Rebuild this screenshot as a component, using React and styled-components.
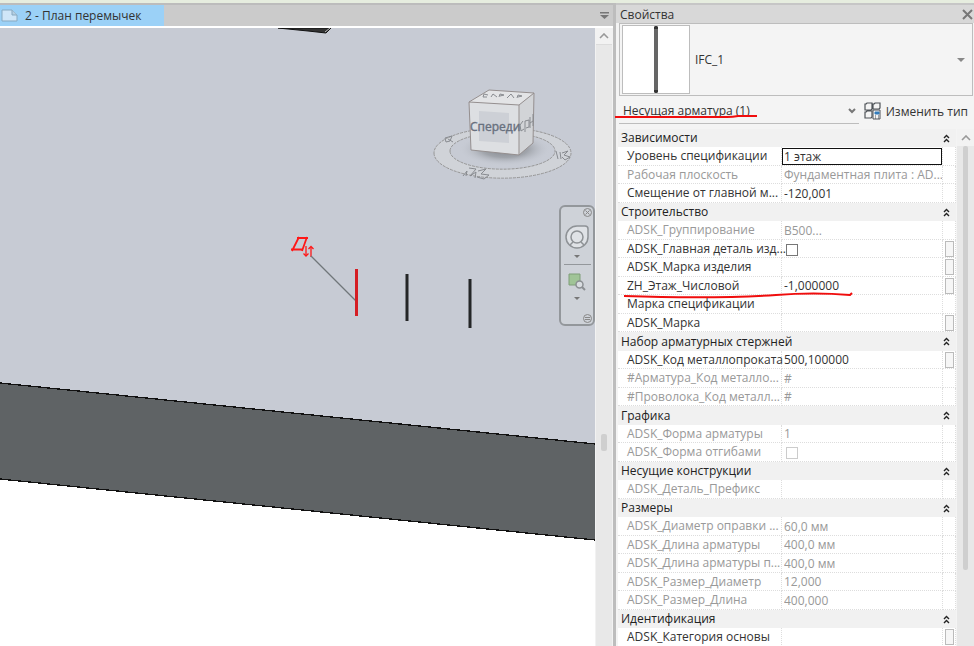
import React, { useState } from "react";
import styled, { createGlobalStyle } from "styled-components";

const GlobalStyle = createGlobalStyle`
  * {
    box-sizing: border-box;
  }

  body {
    margin: 0;
    font-family: "Open Sans", "Noto Sans", sans-serif;
    font-size: 12px;
    color: #333;
    background: #f4f4f4;
  }

  button {
    font: inherit;
    color: inherit;
    padding: 0;
    border: none;
    background: none;
    cursor: pointer;
  }
`;

const Page = styled.div`
  display: grid;
  grid-template-columns: minmax(0, 1fr) 361px;
  height: 100vh;
  overflow: hidden;
  border-top: 3px solid #e6eddf;
`;

const Workspace = styled.main`
  display: flex;
  flex-direction: column;
  min-width: 0;
  min-height: 0;
  background: #fff;
`;

const TabBar = styled.div`
  display: flex;
  align-items: stretch;
  justify-content: space-between;
  height: 23px;
  flex: none;
  background: #cbcbcb;
  border-top: 2px solid #bcbcbc;

  .tab {
    display: flex;
    align-items: center;
    gap: 7px;
    width: 164px;
    padding: 0 1px;
    background: #9bd1f7;
    line-height: 21px;
  }

  .list {
    display: flex;
    align-items: center;
    padding: 0 4px;
  }
`;

const ViewRow = styled.div`
  display: flex;
  flex: 1;
  min-height: 0;
  margin-top: 2px;
`;

const Viewport = styled.div`
  position: relative;
  flex: 1;
  min-width: 0;
  overflow: hidden;
  background: #c7cbd4;

  .scene {
    display: block;
    width: 100%;
    height: 100%;
  }
`;

const NavBar = styled.div`
  position: absolute;
  right: 0;
  top: 177px;
  display: flex;
  flex-direction: column;
  align-items: center;
  width: 36px;
  height: 121px;
  padding: 1px;
  border: 2px solid #93979b;
  border-radius: 6px;
  background: #ced2d8;

  button {
    display: flex;
  }

  .small {
    align-self: flex-end;
  }

  .wheel {
    margin-top: 8px;
  }

  .arrow {
    padding: 6px 4px;
  }

  .zoom {
    margin-top: 8px;
  }

  hr {
    width: 27px;
    margin: 0;
    border: none;
    border-top: 1px solid #93979b;
  }

  .bottom {
    margin-top: auto;
  }
`;

const ViewScroll = styled.div`
  display: flex;
  flex-direction: column;
  justify-content: space-between;
  align-items: center;
  width: 18px;
  background: #e8e8e8;
  border-left: 1px solid #f2f2f2;
  border-right: 1px solid #f2f2f2;

  button {
    display: flex;
    align-items: center;
    justify-content: center;
    width: 100%;
    height: 17px;
    background: #f2f2f2;
    border-bottom: 1px solid #dcdcdc;
  }

  .thumb {
    width: 6px;
    height: 17px;
    margin-bottom: 195px;
    border-radius: 2px;
    background: #cfcfcf;
  }
`;

const Panel = styled.aside`
  position: relative;
  display: flex;
  flex-direction: column;
  min-height: 0;
  border-left: 3px solid #bdbdbd;
  background: #f4f4f4;
`;

const PanelTitle = styled.header`
  display: flex;
  align-items: center;
  justify-content: space-between;
  height: 20px;
  flex: none;
  padding: 0 1px 0 4px;
  border-top: 2px solid #c6c6c6;
  background: #d8d8d8;

  h1 {
    margin: 0;
    font-size: 12px;
    font-weight: 400;
  }

  button {
    display: flex;
  }
`;

const TypeSelector = styled.button`
  && {
    display: flex;
    align-items: center;
    gap: 5px;
    height: 73px;
    flex: none;
    margin: 0 1px 0 3px;
    padding: 1px 7px 1px 2px;
    border: 1px solid #bdbdbd;
    text-align: left;
  }

  .preview {
    display: flex;
    justify-content: center;
    width: 68px;
    height: 69px;
    border: 1px solid #bdbdbd;
    background: #fff;
  }

  .name {
    flex: 1;
  }
`;

const FilterRow = styled.div`
  display: flex;
  height: 33px;
  flex: none;
  padding: 2px 6px 0 3px;

  .filter {
    position: relative;
    display: flex;
    align-items: center;
    flex: 1;
    height: 26px;
    border-bottom: 1px solid #bdbdbd;
  }

  .filter svg {
    position: absolute;
    right: 3px;
    pointer-events: none;
  }

  select {
    width: 100%;
    padding: 0 0 0 4px;
    border: none;
    background: transparent;
    font: inherit;
    color: inherit;
    appearance: none;
  }

  button {
    display: flex;
    align-items: center;
    gap: 4px;
    height: 26px;
    padding-left: 5px;
    white-space: nowrap;
  }
`;

const PanelBody = styled.div`
  display: flex;
  align-items: flex-start;
  justify-content: space-between;
  flex: 1;
  min-height: 0;
  padding-left: 2px;
  overflow: hidden;
`;

const PropTable = styled.table`
  width: 338px;
  table-layout: fixed;
  border-collapse: separate;
  border-spacing: 0;
  line-height: 16px;
  background: #fff;

  .name-col {
    width: 164px;
  }

  .button-col {
    width: 13px;
  }

  tr {
    height: 18px;
  }

  tr:nth-child(even) {
    height: 19px;
  }

  th,
  td {
    padding: 0;
    font-weight: 400;
    text-align: left;
    white-space: nowrap;
  }
`;

const GroupRow = styled.tr`
  background: #f1f1f1;
  color: #222;

  th {
    padding: 0 0 0 3px;
  }

  td button {
    display: flex;
  }
`;

const PropRow = styled.tr`
  color: ${({ $muted }) => ($muted ? "#999" : "#333")};

  th,
  td {
    border-bottom: 1px dotted #ddd;
    border-right: 1px dotted #ddd;
  }

  th {
    padding-left: 9px;
  }

  input[type="text"] {
    display: block;
    width: 100%;
    height: 17px;
    padding: 0 0 0 2px;
    border: none;
    outline: none;
    background: transparent;
    font: inherit;
    color: inherit;
  }

  input[type="text"].active {
    padding-left: 1px;
    border: 1px solid #111;
    background: #fff;
  }

  input[type="checkbox"] {
    display: block;
    width: 12px;
    height: 12px;
    margin: 2px 0 0 4px;
    border: 1px solid ${({ $muted }) => ($muted ? "#ccc" : "#777")};
    background: #fff;
    appearance: none;
  }

  td button {
    display: block;
    width: 9px;
    height: 16px;
    margin-left: 2px;
    border: 1px solid #bbb;
    background: #f6f6f6;
  }
`;

const PanelScroll = styled.div`
  display: flex;
  flex-direction: column;
  align-items: center;
  align-self: stretch;
  width: 17px;
  background: #e8e8e8;

  button {
    display: flex;
    align-items: center;
    justify-content: center;
    width: 100%;
    height: 17px;
    flex: none;
    background: #f2f2f2;
  }

  .thumb {
    width: 5px;
    height: 82%;
    border-radius: 2px;
    background: #cfcfcf;
  }
`;

const Marker = styled.svg`
  position: absolute;
  left: ${({ $left }) => $left}px;
  top: ${({ $top }) => $top}px;
  overflow: visible;
  pointer-events: none;
`;

const groups = [
  {
    title: "Зависимости",
    rows: [
      { name: "Уровень спецификации", value: "1 этаж", active: true },
      { name: "Рабочая плоскость", value: "Фундаментная плита : AD...", muted: true },
      { name: "Смещение от главной м...", value: "-120,001" },
    ],
  },
  {
    title: "Строительство",
    rows: [
      { name: "ADSK_Группирование", value: "B500...", muted: true },
      { name: "ADSK_Главная деталь изд...", check: true, button: true },
      { name: "ADSK_Марка изделия", value: "", button: true },
      { name: "ZH_Этаж_Числовой", value: "-1,000000", button: true },
      { name: "Марка спецификации", value: "" },
      { name: "ADSK_Марка", value: "", button: true },
    ],
  },
  {
    title: "Набор арматурных стержней",
    rows: [
      { name: "ADSK_Код металлопроката", value: "500,100000", button: true },
      { name: "#Арматура_Код металло...", value: "#", muted: true },
      { name: "#Проволока_Код металл...", value: "#", muted: true },
    ],
  },
  {
    title: "Графика",
    rows: [
      { name: "ADSK_Форма арматуры", value: "1", muted: true },
      { name: "ADSK_Форма отгибами", check: true, muted: true },
    ],
  },
  {
    title: "Несущие конструкции",
    rows: [{ name: "ADSK_Деталь_Префикс", value: "", muted: true }],
  },
  {
    title: "Размеры",
    rows: [
      { name: "ADSK_Диаметр оправки ...", value: "60,0 мм", muted: true },
      { name: "ADSK_Длина арматуры", value: "400,0 мм", muted: true },
      { name: "ADSK_Длина арматуры п...", value: "400,0 мм", muted: true },
      { name: "ADSK_Размер_Диаметр", value: "12,000", muted: true },
      { name: "ADSK_Размер_Длина", value: "400,000", muted: true },
    ],
  },
  {
    title: "Идентификация",
    rows: [{ name: "ADSK_Категория основы", value: "", button: true }],
  },
];

const Triangle = ({ size = 8, color = "#777" }) => (
  <svg width={size} height={size / 2} viewBox="0 0 8 4">
    <path d="M0 0H8L4 4Z" fill={color} />
  </svg>
);

const ChevronUp = () => (
  <svg width="10" height="6" viewBox="0 0 10 6" fill="none">
    <path d="M1 5L5 1L9 5" stroke="#999" strokeWidth="1.6" />
  </svg>
);

const DoubleChevron = () => (
  <svg width="7" height="9" viewBox="0 0 7 9" fill="none">
    <path d="M1 4L3.5 1.5L6 4M1 8L3.5 5.5L6 8" stroke="#222" strokeWidth="1.4" />
  </svg>
);

// 3D-вид: перемычка, стержни и видовой куб
const Scene = () => (
  <svg className="scene" viewBox="0 28 595 618" preserveAspectRatio="xMinYMin slice">
    <defs>
      <radialGradient id="shadow">
        <stop offset="0" stopColor="#7d8187" />
        <stop offset="0.5" stopColor="#969aa0" stopOpacity="0.8" />
        <stop offset="1" stopColor="#c7cbd4" stopOpacity="0" />
      </radialGradient>
    </defs>

    <path d="M0 479L595 540V646H0Z" fill="#fff" />
    <path d="M0 383L595 444V540L0 479Z" fill="#5f6365" />
    <path d="M0 383L595 444M0 479L595 540" stroke="#111" strokeWidth="1.3" shapeRendering="crispEdges" />
    <path d="M278 28H331L326 33L308 31Z" fill="#333" stroke="#111" />
    <path d="M325 32L330 28" stroke="#bbb" />

    <path
      d="M434 153A68 25 0 1 0 571 153A68 25 0 1 0 434 153ZM450 151A52 18 0 1 1 555 151A52 18 0 1 1 450 151Z"
      fill="#d0d3d8"
      fillRule="evenodd"
      stroke="#969696"
      strokeDasharray="3 1"
    />
    <ellipse cx="505" cy="149" rx="46" ry="17" fill="url(#shadow)" />
    <path d="M469 102L519 105V155L471 150Z" fill="#dddfe2" />
    <path d="M479 111L509 113V143L479 141Z" fill="#cdd0d6" />
    <path d="M469 102L489 90L534 93L519 105Z" fill="#e3e4e6" />
    <path d="M519 105L534 93L533 143L519 155Z" fill="#d2d4d7" />
    <path
      d="M469 102L519 105V155L471 150ZM469 102L489 90L534 93L519 105M534 93L533 143L519 155"
      fill="none"
      stroke="#958f8f"
      strokeLinejoin="round"
    />
    <text x="470" y="131" fontSize="12" fill="#68707e" stroke="#68707e" strokeWidth="0.4">
      Спереди
    </text>
    <g fill="none" stroke="#888b90">
      <path d="M488 95L484 94L483 97L487 97M491 97L493 94L497 97M499 97L500 94L504 95L500 96M507 98L511 94L514 98M517 98L518 95L522 96L518 97" />
      <path d="M523 121L520 125L521 131L524 129M525 132V121L529 120V127L526 128M530 128V117M530 123L533 121M533 126V114" />
      <path d="M445 138L452 136L450 141L446 142ZM448 139L453 142" />
      <path d="M556 151L558 159M560 152L561 159M562 153L568 151L564 155L570 157L565 160L562 157" />
      <path d="M463 176L467 171L466 176M469 168L476 169L470 176L476 172L475 178M478 171L486 169L481 174L489 175L484 179L477 177" />
    </g>

    <g stroke="#ff1717" fill="none">
      <path d="M297 238H308M291 249.500H303M299 237L292 251M307 237L302 251" strokeWidth="1.8" />
      <path d="M306 246V256M311 257V247" strokeWidth="1.3" />
      <path d="M303.500 253.500L306 256L308.500 253.500M308.500 249L311 246.500L313.500 249" strokeWidth="1.3" />
    </g>
    <path d="M311 256L356 301" stroke="#71767a" strokeWidth="1.3" />
    <path d="M356.500 269V316" stroke="#d51e24" strokeWidth="3" />
    <path d="M407 274V321M470 279V328" stroke="#242627" strokeWidth="3" />
  </svg>
);

const NavigationBar = () => (
  <NavBar>
    <button className="small" aria-label="Закрыть">
      <svg width="9" height="9" viewBox="0 0 9 9" fill="none" stroke="#888">
        <circle cx="4.500" cy="4.500" r="4" />
        <path d="M2.500 2.500L6.500 6.500M6.500 2.500L2.500 6.500" />
      </svg>
    </button>
    <button className="wheel" aria-label="Штурвал">
      <svg width="24" height="24" viewBox="0 0 24 24" fill="#dfe2e6" stroke="#8e9296" strokeWidth="1.500">
        <path d="M12 1H20Q23 1 23 4V12A11 11 0 1 1 12 1Z" />
        <circle cx="12" cy="12" r="6" />
        <path d="M8 17L5 20M16 17L19 20" />
      </svg>
    </button>
    <button className="arrow" aria-label="Параметры штурвала">
      <Triangle size={6} />
    </button>
    <hr />
    <button className="zoom" aria-label="Зумирование">
      <svg width="18" height="18" viewBox="0 0 18 18">
        <path d="M1 1H12V12H1Z" fill="#a0c497" stroke="#7e9e79" />
        <circle cx="11.500" cy="11.500" r="3.500" fill="#d9dde1" stroke="#8b8f93" strokeWidth="1.500" />
        <path d="M14 14L17 17" stroke="#8b8f93" strokeWidth="2" />
      </svg>
    </button>
    <button className="arrow" aria-label="Параметры зумирования">
      <Triangle size={6} />
    </button>
    <button className="small bottom" aria-label="Параметры панели">
      <svg width="9" height="9" viewBox="0 0 9 9" fill="none" stroke="#888">
        <circle cx="4.500" cy="4.500" r="4" />
        <path d="M2 3.500H7M2 5.500H7" />
      </svg>
    </button>
  </NavBar>
);

const Property = ({ row }) => {
  const [value, setValue] = useState(row.value);
  const [checked, setChecked] = useState(false);

  return (
    <PropRow $muted={row.muted}>
      <th scope="row">
        <label htmlFor={row.name}>{row.name}</label>
      </th>
      <td>
        {row.check ? (
          <input
            id={row.name}
            type="checkbox"
            checked={checked}
            disabled={row.muted}
            onChange={(e) => setChecked(e.target.checked)}
          />
        ) : (
          <input
            id={row.name}
            type="text"
            className={row.active ? "active" : undefined}
            value={value}
            readOnly={row.muted}
            onChange={(e) => setValue(e.target.value)}
          />
        )}
      </td>
      <td>{row.button && <button aria-label={`Связать ${row.name}`} />}</td>
    </PropRow>
  );
};

const App = () => (
  <>
    <GlobalStyle />
    <Page>
      <Workspace>
        <TabBar>
          <button className="tab">
            <svg width="17" height="13" viewBox="0 0 17 13">
              <path d="M1 1H11L16 6V12H1Z" fill="#cfe6f8" stroke="#87a9c1" />
              <path d="M11 1V6H16" fill="#b5cfe2" stroke="#87a9c1" />
            </svg>
            2 - План перемычек
          </button>
          <button className="list" aria-label="Список видов">
            <svg width="9" height="7" viewBox="0 0 9 7">
              <path d="M0 0H9V1.500H0ZM0 3H9L4.500 7Z" fill="#777" />
            </svg>
          </button>
        </TabBar>
        <ViewRow>
          <Viewport>
            <Scene />
            <NavigationBar />
          </Viewport>
          <ViewScroll>
            <button aria-label="Прокрутить вверх">
              <ChevronUp />
            </button>
            <div className="thumb" />
          </ViewScroll>
        </ViewRow>
      </Workspace>

      <Panel>
        <PanelTitle>
          <h1>Свойства</h1>
          <button aria-label="Закрыть свойства">
            <svg width="11" height="11" viewBox="0 0 11 11">
              <path d="M1 1L10 10M10 1L1 10" stroke="#777" strokeWidth="2" />
            </svg>
          </button>
        </PanelTitle>
        <TypeSelector>
          <span className="preview">
            <svg width="4" height="67" viewBox="0 0 4 67">
              <path d="M0 1Q2 -1 4 1V66Q2 68 0 66Z" fill="#666" />
              <path d="M0 1Q2 -1 4 1V3H0ZM0 64H4V66Q2 68 0 66Z" fill="#333" />
            </svg>
          </span>
          <span className="name">IFC_1</span>
          <Triangle color="#888" />
        </TypeSelector>
        <FilterRow>
          <div className="filter">
            <select aria-label="Категория">
              <option>Несущая арматура (1)</option>
            </select>
            <svg width="8" height="6" viewBox="0 0 8 6" fill="none">
              <path d="M1 1L4 4L7 1" stroke="#777" strokeWidth="2" />
            </svg>
          </div>
          <button>
            <svg width="18" height="18" viewBox="0 0 18 18" fill="none" stroke="#4e5358">
              <path d="M2 2L3 1H8V7L7 8H1V2ZM10 2L11 1H16V6L15 7H9V2ZM2 10L3 9H8V15L7 16H1V10Z" strokeWidth="1.200" />
              <path d="M9 8H16V17H9Z" fill="#f4f4f4" />
              <path d="M11 10H15V12H11Z" fill="#347dbb" stroke="#347dbb" />
              <path d="M11 14H12M14 14H15M11 16H12M14 16H15" />
            </svg>
            Изменить тип
          </button>
        </FilterRow>
        <PanelBody>
          <PropTable>
            <colgroup>
              <col className="name-col" />
              <col />
              <col className="button-col" />
            </colgroup>
            <tbody>
              {groups.map((group) => (
                <React.Fragment key={group.title}>
                  <GroupRow>
                    <th colSpan="2" scope="colgroup">
                      {group.title}
                    </th>
                    <td>
                      <button aria-label={`Свернуть ${group.title}`}>
                        <DoubleChevron />
                      </button>
                    </td>
                  </GroupRow>
                  {group.rows.map((row) => (
                    <Property key={row.name} row={row} />
                  ))}
                </React.Fragment>
              ))}
            </tbody>
          </PropTable>
          <PanelScroll>
            <button aria-label="Прокрутить свойства вверх">
              <ChevronUp />
            </button>
            <div className="thumb" />
          </PanelScroll>
        </PanelBody>

        <Marker $left={-1} $top={111} width="142" height="6" fill="none" stroke="#f00d0d" strokeWidth="2">
          <path d="M0 3H112Q118 3 123 2H142" />
        </Marker>
        <Marker $left={8} $top={289} width="230" height="6" fill="none" stroke="#f00d0d" strokeWidth="2">
          <path d="M0 4Q90 7 152 3Q190 0 226 3L228 1" />
        </Marker>
      </Panel>
    </Page>
  </>
);

export default App;
